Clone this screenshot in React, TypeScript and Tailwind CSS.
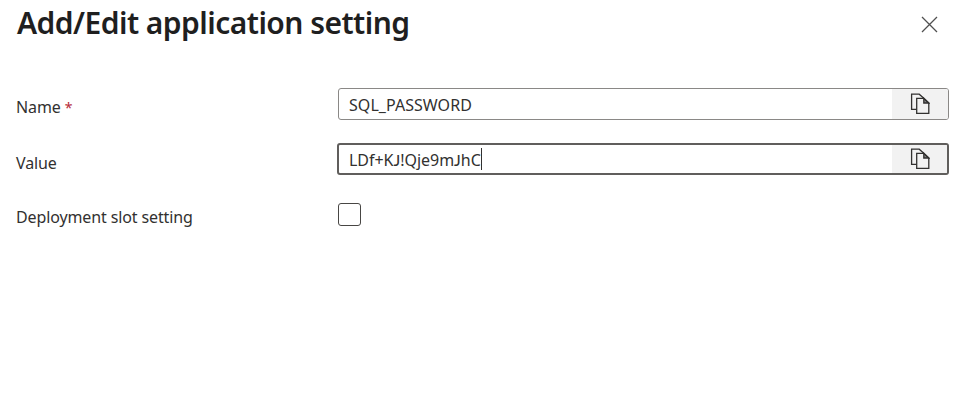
function CopyIcon() {
  return (
    <svg width="20" height="22" viewBox="0 0 20 22" fill="none" stroke="#323130" strokeWidth="1.3" aria-hidden="true">
      <path d="M6.5 16.4H1.6V1.2H9.2L13.8 5.3" />
      <path d="M6.7 5.3H13.8L18.8 10V20.4H6.7Z" />
      <path d="M13.8 5.3V10H18.8Z" fill="#323130" fillOpacity="0.6" />
    </svg>
  );
}

function CopyButton({ label }: { label: string }) {
  return (
    <button aria-label={label} className="flex h-full w-[56px] shrink-0 items-center justify-center bg-[#f2f2f2]">
      <CopyIcon />
    </button>
  );
}

export default function App() {
  return (
    <div className="h-[401px] w-[975px] overflow-hidden bg-white pl-4 pr-[26px] font-['Noto_Sans',sans-serif] text-base text-[#323130]">
      <header className="flex h-[88px] items-start justify-between">
        <h1 className="mt-[3px] ml-px whitespace-nowrap text-[30px] leading-[40px] font-semibold tracking-[-0.54px] text-[#1f1f1f]">
          Add/Edit application setting
        </h1>
        <button aria-label="Close" className="mt-4 mr-[11px]">
          <svg width="17" height="17" viewBox="0 0 17 17" fill="none" stroke="#505050" strokeWidth="1.3">
            <path d="M1 1L16 16M16 1L1 16" />
          </svg>
        </button>
      </header>
      <main>
        <div className="flex h-[55px] items-start">
          <div className="mt-[7px] w-[322px] shrink-0 leading-6 tracking-[-0.1px]">
            Name <span className="text-sm text-[#b52a38]">*</span>
          </div>
          <div className="flex h-8 flex-1 items-center overflow-hidden rounded-[3px] border border-[#8a8886] bg-white">
            <span className="flex-1 pt-0.5 pl-2.5 leading-6 tracking-[0.05px]">SQL_PASSWORD</span>
            <CopyButton label="Copy name" />
          </div>
        </div>
        <div className="flex h-[59px] items-start">
          <div className="mt-2 w-[321px] shrink-0 leading-6 tracking-[-0.1px]">Value</div>
          <div className="flex h-8 flex-1 items-center overflow-hidden rounded-[3px] border-2 border-[#605e5c] bg-white">
            <span className="flex flex-1 items-center pl-2.5 leading-6 tracking-[-0.03px]">
              <span className="pt-0.5">
                LDf+K<span className="font-['Lato',sans-serif]">J</span>!Qje9m
                <span className="font-['Lato',sans-serif]">J</span>hC
              </span>
              <span className="h-[22px] w-px bg-[#323130]" />
            </span>
            <div className="-mr-px h-full">
              <CopyButton label="Copy value" />
            </div>
          </div>
        </div>
        <div className="flex items-start">
          <div className="mt-[3px] w-[322px] shrink-0 leading-6 tracking-[-0.12px]">Deployment slot setting</div>
          <div className="mt-px h-[23px] w-[23px] rounded-[3px] border border-[#484644]" />
        </div>
      </main>
    </div>
  );
}
